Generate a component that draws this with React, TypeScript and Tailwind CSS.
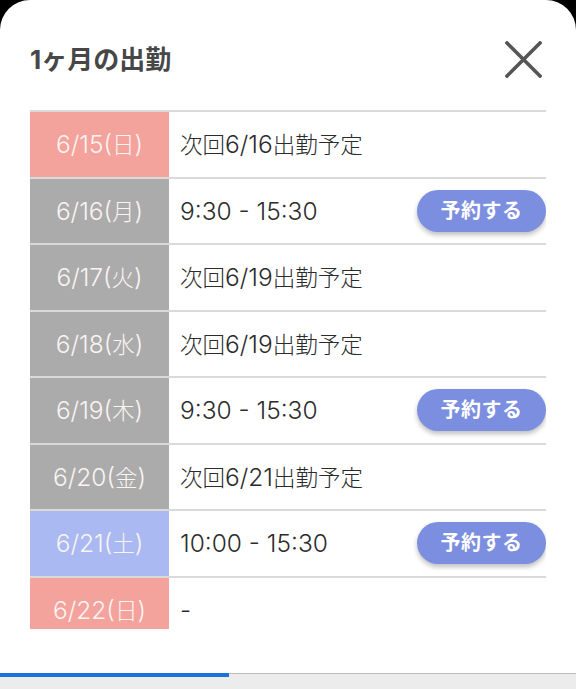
type Shift = {
  date: string;
  kind: "sun" | "weekday" | "sat";
  text: string;
  reservable?: boolean;
};

const shifts: Shift[] = [
  { date: "6/15(日)", kind: "sun", text: "次回6/16出勤予定" },
  { date: "6/16(月)", kind: "weekday", text: "9:30 - 15:30", reservable: true },
  { date: "6/17(火)", kind: "weekday", text: "次回6/19出勤予定" },
  { date: "6/18(水)", kind: "weekday", text: "次回6/19出勤予定" },
  { date: "6/19(木)", kind: "weekday", text: "9:30 - 15:30", reservable: true },
  { date: "6/20(金)", kind: "weekday", text: "次回6/21出勤予定" },
  { date: "6/21(土)", kind: "sat", text: "10:00 - 15:30", reservable: true },
  { date: "6/22(日)", kind: "sun", text: "-" },
];

const dateColors = {
  sun: "bg-[#f3a29c]",
  weekday: "bg-[#ababab]",
  sat: "bg-[#aab9f2]",
};

// Latin glyphs sit a bit larger than the kanji in the original, so split the runs
function MixedText({ text }: { text: string }) {
  const parts = text.split(/([\u3000-\u9fff]+)/).filter(Boolean);
  return (
    <span className="leading-none">
      {parts.map((part, i) =>
        /[\u3000-\u9fff]/.test(part) ? (
          <span key={i} className="text-[22.5px]">
            {part}
          </span>
        ) : (
          <span key={i} className="text-[24.5px]">
            {part}
          </span>
        ),
      )}
    </span>
  );
}

function ShiftRow({ shift }: { shift: Shift }) {
  return (
    <div className="flex h-[66.5px] shrink-0 border-b-2 border-[#dadada]">
      <div
        className={`flex w-[139px] shrink-0 items-center justify-center font-light text-[#faf4f3] ${dateColors[shift.kind]}`}
      >
        <MixedText text={shift.date} />
      </div>
      <div className="flex flex-1 items-center justify-between pl-[11px] font-light text-[#2b2b2b]">
        <MixedText text={shift.text} />
        {shift.reservable && (
          <button
            type="button"
            className="flex h-[42px] w-[129px] items-center justify-center rounded-full bg-[#7b8ee0] text-[20px] font-bold tracking-wide text-white shadow-[0_3px_5px_rgba(0,0,0,0.25)]"
          >
            予約する
          </button>
        )}
      </div>
    </div>
  );
}

export default function App() {
  return (
    <div
      className="flex h-[689px] w-[576px] flex-col bg-black"
      style={{ fontFamily: 'Inter, "Noto Sans CJK JP", sans-serif' }}
    >
      <div className="flex flex-1 flex-col rounded-t-[30px] bg-white">
        <header className="flex h-[110px] shrink-0 items-center justify-between pl-[30px] pr-[34px] pt-[8px]">
          <h2 className="text-[26px] font-bold text-[#474747]">1ヶ月の出勤</h2>
          <button type="button" aria-label="閉じる" className="text-[#555555]">
            <svg width="37" height="37" viewBox="0 0 37 37" fill="none">
              <path
                d="M2 2 L35 35 M35 2 L2 35"
                stroke="currentColor"
                strokeWidth="3.6"
                strokeLinecap="square"
              />
            </svg>
          </button>
        </header>

        <div className="mx-[30px] flex h-[519px] flex-col overflow-hidden border-t-2 border-[#dadada]">
          {shifts.map((shift) => (
            <ShiftRow key={shift.date} shift={shift} />
          ))}
        </div>
      </div>

      <div className="h-[16px] shrink-0 border-t border-[#bdbdbd] bg-[#ececec]">
        <div className="-mt-px h-[4px] w-[229px] bg-[#1a73d8]" />
      </div>
    </div>
  );
}
